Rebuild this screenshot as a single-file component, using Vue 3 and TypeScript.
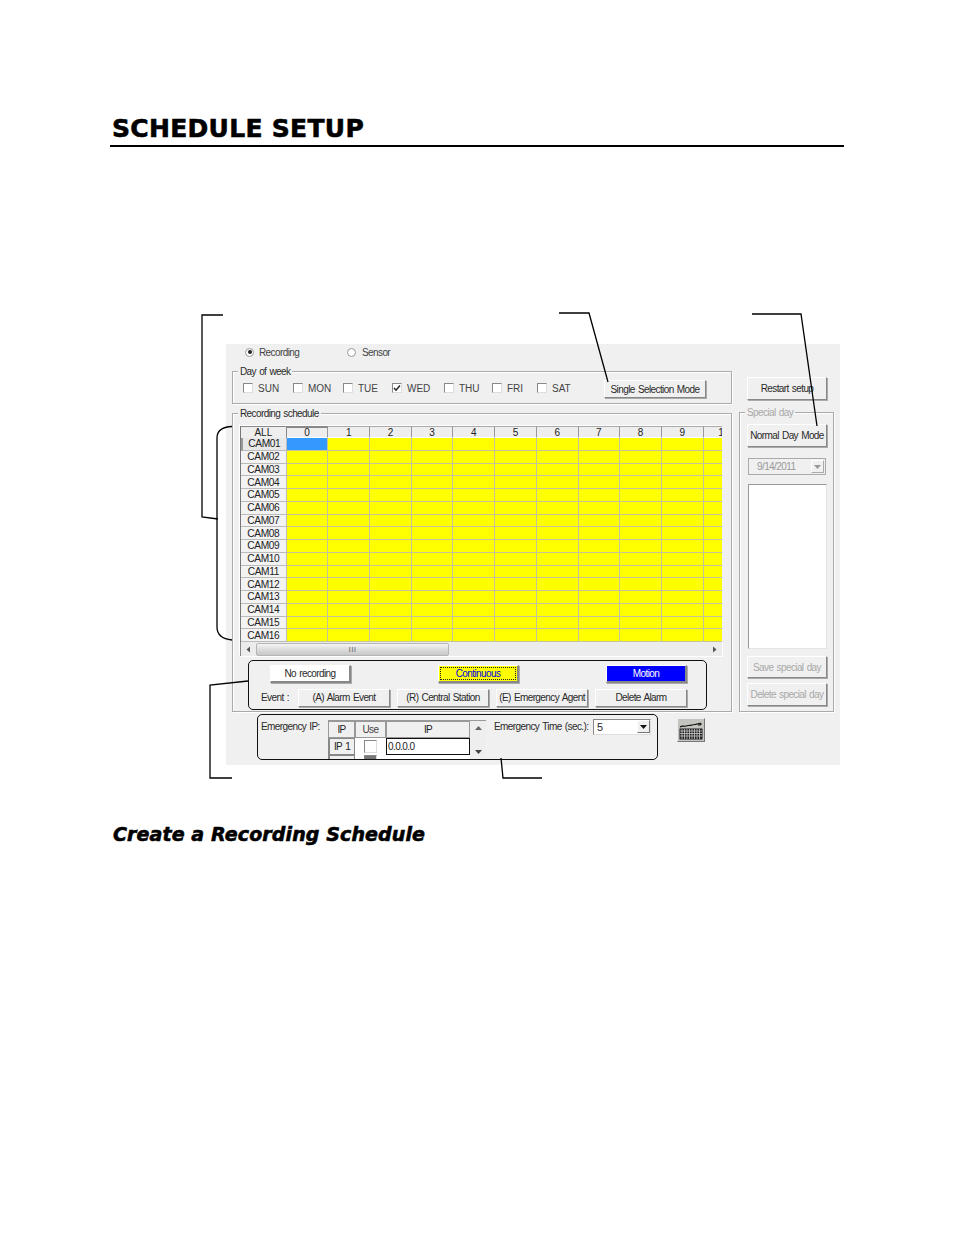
<script setup lang="ts">
const days = [
  { name: 'SUN', width: 50, checked: false },
  { name: 'MON', width: 50, checked: false },
  { name: 'TUE', width: 49, checked: false },
  { name: 'WED', width: 52, checked: true },
  { name: 'THU', width: 48, checked: false },
  { name: 'FRI', width: 45, checked: false },
  { name: 'SAT', width: 67, checked: false },
]
const hours: string[] = Array.from({ length: 11 }, (_, i) => String(i))
const cams: string[] = Array.from({ length: 16 }, (_, i) => 'CAM' + String(i + 1).padStart(2, '0'))
const cellIds: number[] = Array.from({ length: 11 }, (_, i) => i)
</script>

<template>
  <div class="page">
    <h1 class="title">SCHEDULE SETUP</h1>

    <section class="panel">
      <div class="radios">
        <label class="radio"><i class="dot on"></i>Recording</label>
        <label class="radio"><i class="dot"></i>Sensor</label>
      </div>

      <div class="columns">
        <div class="left">
          <div class="group week">
            <div class="legend">Day of week</div>
            <div class="week-row">
              <div v-for="d in days" :key="d.name" class="day" :style="{ width: d.width + 'px' }">
                <span class="check">
                  <svg v-if="d.checked" viewBox="0 0 10 10" width="10" height="10"><path d="M2 5l2 2.2L8 2.6" fill="none" stroke="#222" stroke-width="1.5" /></svg>
                </span>
                <span class="day-name">{{ d.name }}</span>
              </div>
              <button class="btn mode">Single Selection Mode</button>
            </div>
          </div>

          <div class="group schedule">
            <div class="legend">Recording schedule</div>
            <div class="grid-wrap">
              <div class="grid">
                <div class="hd all">ALL</div>
                <div v-for="(h, i) in hours" :key="h" class="hd" :class="{ sel: i === 0 }">{{ h }}</div>
                <template v-for="(c, r) in cams" :key="c">
                  <div class="cam" :class="{ sel: r === 0 }">{{ c }}</div>
                  <div v-for="n in cellIds" :key="n" class="cell" :class="{ cur: r === 0 && n === 0 }"></div>
                </template>
              </div>
              <div class="hscroll">
                <svg class="arr" width="5" height="7" viewBox="0 0 5 7"><path d="M4 0.5v6L0.5 3.5z" fill="#555" /></svg>
                <div class="thumb"><span>III</span></div>
                <svg class="arr end" width="5" height="7" viewBox="0 0 5 7"><path d="M1 0.5v6L4.5 3.5z" fill="#555" /></svg>
              </div>
            </div>

            <div class="modes">
              <div class="mode-row">
                <button class="btn swatch white">No recording</button>
                <button class="btn swatch yellow"><span>Continuous</span></button>
                <button class="btn swatch blue">Motion</button>
              </div>
              <div class="event-row">
                <span class="event-label">Event :</span>
                <button class="btn ev">(A) Alarm Event</button>
                <button class="btn ev">(R) Central Station</button>
                <button class="btn ev">(E) Emergency Agent</button>
                <button class="btn ev">Delete Alarm</button>
              </div>
            </div>
          </div>
        </div>

        <div class="right">
          <button class="btn side restart">Restart setup</button>
          <div class="group special">
            <div class="legend muted">Special day</div>
            <button class="btn side normal">Normal Day Mode</button>
            <div class="date">
              <span>9/14/2011</span>
              <i class="date-arrow"><svg width="7" height="4" viewBox="0 0 7 4"><path d="M0 0h7L3.5 4z" fill="#999" /></svg></i>
            </div>
            <div class="list"></div>
            <button class="btn side off save">Save special day</button>
            <button class="btn side off del">Delete special day</button>
          </div>
        </div>
      </div>

      <div class="bottom">
        <div class="emergency">
          <span class="em-label">Emergency IP:</span>
          <div class="ip-table">
            <div class="ip-grid">
              <div class="ip-h">IP</div>
              <div class="ip-h use">Use</div>
              <div class="ip-h wide">IP</div>
              <div class="ip-h row">IP 1</div>
              <div class="ip-use"><span class="ip-check"></span></div>
              <div class="ip-edit">0.0.0.0</div>
              <div class="ip-h row"></div>
              <div class="ip-use"><span class="ip-check dark"></span></div>
              <div class="ip-edit blank"></div>
            </div>
            <div class="vscroll">
              <svg width="7" height="4" viewBox="0 0 7 4"><path d="M0 4h7L3.5 0z" fill="#666" /></svg>
              <svg width="7" height="4" viewBox="0 0 7 4"><path d="M0 0h7L3.5 4z" fill="#444" /></svg>
            </div>
          </div>
          <span class="em-time">Emergency Time (sec.):</span>
          <div class="combo">
            <span>5</span>
            <i><svg width="7" height="4" viewBox="0 0 7 4"><path d="M0 0h7L3.5 4z" fill="#111" /></svg></i>
          </div>
        </div>
        <button class="kbd" aria-label="Keyboard">
          <svg width="26" height="22" viewBox="0 0 26 22">
            <path d="M2 8c3-2 4 0 6-1s3 0 6-1 3 0 5-1c3-1 4-1 4 0s-2 1-3 1" fill="none" stroke="#111" stroke-width="1.2" />
            <rect x="1.5" y="9.5" width="23" height="11" fill="#222" />
            <path d="M2 12h22M2 14.500h22M2 17h22M4 10v10M6.500 10v10M9 10v10M11.500 10v10M14 10v10M16.500 10v10M19 10v10M21.500 10v10" stroke="#ddd" stroke-width="0.7" />
          </svg>
        </button>
      </div>
    </section>

    <h2 class="sub">Create a Recording Schedule</h2>

    <svg class="callouts" width="954" height="1235" viewBox="0 0 954 1235" fill="none" stroke="#000" stroke-width="1.300">
      <path d="M223 315H202V517L218 519" />
      <path d="M232 426.500C222 427 217 431 217 438V627C217 635 222 639 232 640" />
      <path d="M559 313H589L608 382" />
      <path d="M752 314H801L817 426" />
      <path d="M248 681L210 685V778H232" />
      <path d="M501 758L503 778H542" />
    </svg>
  </div>
</template>

<style scoped>
.page {
  position: relative;
  width: 954px;
  height: 1235px;
  padding-top: 116px;
  box-sizing: border-box;
  background: #fff;
  overflow: hidden;
  font-family: "Liberation Sans", Arial, sans-serif;
  color: #000;
}
.title {
  margin: 0 110px;
  height: 29px;
  padding-left: 2px;
  border-bottom: 2px solid #000;
  font-family: "DejaVu Sans", sans-serif;
  font-size: 25px;
  line-height: 25px;
  font-weight: 700;
  letter-spacing: 0.3px;
  -webkit-text-stroke: 0.6px #000;
  white-space: nowrap;
}
.sub {
  margin: 57px 0 0 113px;
  font-family: "DejaVu Sans", sans-serif;
  font-size: 19px;
  line-height: 24px;
  font-weight: 700;
  font-style: italic;
  letter-spacing: 0.11px;
  -webkit-text-stroke: 0.6px #000;
  white-space: nowrap;
}
.callouts {
  position: absolute;
  left: 0;
  top: 0;
  pointer-events: none;
}

.panel {
  margin: 197px 0 0 226px;
  width: 614px;
  height: 421px;
  box-sizing: border-box;
  background: #f0f0f0;
  padding: 2px 0 0 6px;
  font-size: 10px;
  letter-spacing: -0.6px;
  word-spacing: 1px;
  color: #2a2a2a;
}
.radios {
  display: flex;
  height: 12px;
  padding-left: 13px;
  align-items: center;
}
.radio {
  display: flex;
  align-items: center;
  width: 102px;
  gap: 5px;
  color: #444;
}
.radio + .radio {
  gap: 6px;
}
.dot {
  position: relative;
  width: 9px;
  height: 9px;
  box-sizing: border-box;
  border-radius: 50%;
  background: #fff;
  border: 1px solid #999;
}
.dot.on::after {
  content: "";
  position: absolute;
  left: 1.500px;
  top: 1.500px;
  width: 4px;
  height: 4px;
  border-radius: 50%;
  background: #222;
}
.columns {
  display: grid;
  grid-template-columns: 500px 95px;
  column-gap: 7px;
  margin-top: 13px;
  width: 602px;
}
.group {
  box-sizing: border-box;
  border: 1px solid #aaa;
  box-shadow: inset 1px 1px 0 #fff, 1px 1px 0 #fff;
}
.legend {
  width: fit-content;
  margin: -6px 0 0 5px;
  padding: 0 2px;
  height: 12px;
  line-height: 12px;
  background: #f0f0f0;
}
.legend.muted {
  color: #a8a8a8;
  margin-left: -2px;
}
.week {
  height: 33px;
}
.week-row {
  display: flex;
  align-items: center;
  padding-left: 10px;
  height: 20px;
}
.day {
  display: flex;
  align-items: center;
  gap: 5px;
  flex: none;
}
.check {
  flex: none;
  width: 10px;
  height: 10px;
  box-sizing: border-box;
  background: #fff;
  border: 1px solid #888;
  border-right-color: #ddd;
  border-bottom-color: #ddd;
  position: relative;
}
.check svg {
  position: absolute;
  left: -1px;
  top: -1px;
}
.day-name {
  letter-spacing: 0;
  color: #444;
}
.btn {
  display: flex;
  align-items: center;
  justify-content: center;
  box-sizing: border-box;
  padding: 0;
  margin: 0;
  font: inherit;
  letter-spacing: inherit;
  word-spacing: inherit;
  color: #2a2a2a;
  white-space: nowrap;
  background: #f0f0f0;
  border: 1px solid;
  border-color: #fff #888 #888 #fff;
  box-shadow: 1px 1px 0 #aaa;
}
.mode {
  flex: none;
  width: 102px;
  height: 18px;
  margin-top: 2px;
}
.schedule {
  margin-top: 9px;
  height: 299px;
}
.grid-wrap {
  width: 482px;
  margin: 6px 0 0 7px;
  background: #f0f0f0;
  box-shadow: -1px -1px 0 #fff;
}
.grid {
  display: grid;
  grid-template-columns: 45.700px repeat(11, 41.700px);
  grid-template-rows: 12px repeat(16, 12.750px);
  width: 482px;
  height: 216px;
  overflow: hidden;
  border-left: 1px solid #777;
  box-sizing: border-box;
}
.hd,
.cam {
  display: flex;
  align-items: center;
  justify-content: center;
  background: #f0f0f0;
  box-sizing: border-box;
  font-size: 10px;
  overflow: hidden;
  white-space: nowrap;
  color: #222;
  letter-spacing: 0;
}
.hd {
  border-top: 1px solid #aaa;
  border-right: 1px solid #999;
  border-bottom: 1px solid #fff;
  background: #eee;
}
.hd.sel {
  border-top: 2px solid #888;
}
.hd.all {
  border: 1px solid #888;
  border-width: 1px 1px 0 0;
}
.cam {
  border-bottom: 1px solid #bbb;
  border-right: 1px solid #bbb;
  background: #f3f3f3;
  font-size: 10.200px;
  letter-spacing: -0.4px;
}
.cam.sel {
  background: #e8e8e8;
  border-left: 2px solid #999;
}
.cell {
  background: #ff0;
  box-sizing: border-box;
  border-right: 1px solid #c4c49a;
  border-bottom: 1px solid #c4c49a;
}
.cell.cur {
  background: #3399ff;
}
.hscroll {
  position: relative;
  display: flex;
  align-items: center;
  height: 14px;
  padding-left: 5px;
  background: #ececec;
  border-left: 1px solid #888;
  box-sizing: border-box;
  box-shadow: 1px 1px 0 #fff;
}
.arr {
  flex: none;
}
.arr.end {
  margin-left: auto;
  margin-right: 5px;
}
.thumb {
  width: 193px;
  height: 13px;
  margin-left: 5px;
  box-sizing: border-box;
  border: 1px solid #b5b5b5;
  border-radius: 2px;
  background: linear-gradient(#f4f4f4, #dcdcdc 50%, #c8c8c8);
  display: flex;
  align-items: center;
  justify-content: center;
  font-size: 8px;
  color: #666;
  letter-spacing: 0.500px;
}
.modes {
  width: 459px;
  height: 50px;
  margin: 4px 0 0 15px;
  box-sizing: border-box;
  border: 1.500px solid #111;
  border-radius: 5px;
  padding-top: 3.500px;
}
.mode-row {
  display: flex;
  padding-left: 21px;
}
.swatch {
  width: 81px;
  height: 18px;
  border-width: 1px 2px 2px 1px;
}
.white {
  background: #fff;
  margin-right: 87px;
}
.yellow {
  background: #ff0;
  color: #0000e0;
  margin-right: 87px;
  padding: 1px;
}
.yellow span {
  display: flex;
  align-items: center;
  justify-content: center;
  width: 100%;
  height: 100%;
  border: 1px dotted #222;
  box-sizing: border-box;
}
.blue {
  background: #0000ff;
  color: #fff;
}
.event-row {
  display: flex;
  align-items: center;
  margin-top: 6px;
  padding-left: 12px;
}
.event-label {
  width: 37px;
  flex: none;
}
.ev {
  flex: none;
  width: 92px;
  height: 18px;
  margin-right: 7px;
}
.right {
  display: flex;
  flex-direction: column;
}
.side {
  width: 80px;
  height: 23px;
}
.restart {
  margin: 6px 0 0 8px;
}
.special {
  margin-top: 12px;
  height: 300px;
  padding-left: 7px;
  display: flex;
  flex-direction: column;
}
.normal {
  margin-top: 5px;
}
.date {
  display: flex;
  align-items: center;
  width: 78px;
  height: 17px;
  margin: 11px 0 0 1px;
  box-sizing: border-box;
  border: 1px solid #aaa;
  padding-left: 8px;
  color: #999;
}
.date-arrow {
  display: flex;
  align-items: center;
  justify-content: center;
  width: 13px;
  height: 13px;
  margin-left: auto;
  margin-right: 1px;
  background: #f0f0f0;
  border: 1px solid;
  border-color: #fff #aaa #aaa #fff;
  box-sizing: border-box;
}
.list {
  width: 79px;
  height: 165px;
  margin: 9px 0 0 1px;
  box-sizing: border-box;
  background: #fff;
  border: 1px solid #999;
  border-right-color: #e4e4e4;
  border-bottom-color: #e4e4e4;
}
.off {
  color: #a8a8a8;
  height: 22px;
  font-size: 10px;
}
.save {
  margin-top: 7px;
}
.del {
  margin-top: 5px;
  height: 23px;
}
.bottom {
  display: flex;
  margin: 2px 0 0 25px;
  align-items: flex-start;
}
.emergency {
  position: relative;
  display: flex;
  align-items: flex-start;
  width: 401px;
  height: 45.500px;
  box-sizing: border-box;
  border: 1.500px solid #111;
  border-radius: 5px;
  overflow: hidden;
  padding-left: 3px;
}
.em-label {
  width: 67px;
  flex: none;
  margin-top: 5.500px;
  line-height: 12px;
}
.ip-table {
  display: flex;
  margin-top: 4.500px;
  flex: none;
  box-shadow: inset 0 1px 0 #888;
}
.ip-grid {
  display: grid;
  grid-template-columns: 27px 31px 84px;
  grid-template-rows: 18px 17px 14px;
  background: #fff;
}
.ip-h {
  display: flex;
  align-items: center;
  justify-content: center;
  box-sizing: border-box;
  background: #f0f0f0;
  border: 1px solid #999;
  border-width: 2px 1px 1px 1px;
  color: #222;
}
.ip-h.use {
  color: #444;
}
.ip-h.row {
  border-width: 1px 1px 1px 2px;
  border-color: #888;
}
.ip-use {
  display: flex;
  align-items: center;
  justify-content: center;
  background: #fff;
}
.ip-check {
  width: 13px;
  height: 13px;
  box-sizing: border-box;
  background: #fff;
  border: 1px solid #888;
  border-right-color: #ddd;
  border-bottom-color: #ddd;
}
.ip-check.dark {
  background: #777;
}
.ip-edit {
  box-sizing: border-box;
  border: 1px solid #111;
  background: #fff;
  padding-left: 1px;
  line-height: 15px;
  color: #222;
}
.ip-edit.blank {
  border: none;
}
.vscroll {
  display: flex;
  flex-direction: column;
  justify-content: space-between;
  align-items: center;
  width: 16px;
  height: 35px;
  padding: 5px 0 1px;
  box-sizing: border-box;
  background: #eee;
  border-top: 1px solid #999;
}
.em-time {
  flex: none;
  width: 99px;
  margin: 5.500px 0 0 8px;
  line-height: 12px;
}
.combo {
  display: flex;
  align-items: center;
  flex: none;
  width: 58px;
  height: 16px;
  margin-top: 3.500px;
  box-sizing: border-box;
  background: #fff;
  border: 1px solid #888;
  border-right-color: #ddd;
  border-bottom-color: #ddd;
  padding-left: 3px;
  font-size: 11px;
}
.combo i {
  display: flex;
  align-items: center;
  justify-content: center;
  width: 13px;
  height: 13px;
  margin-left: auto;
  background: #f0f0f0;
  border: 1px solid;
  border-color: #fff #777 #777 #fff;
  box-sizing: border-box;
}
.kbd {
  flex: none;
  width: 28px;
  height: 24px;
  margin: 4px 0 0 19px;
  padding: 0;
  display: flex;
  align-items: center;
  justify-content: center;
  box-sizing: border-box;
  background: #c4c4c0;
  border: 1px solid;
  border-color: #eee #777 #777 #eee;
}
</style>
